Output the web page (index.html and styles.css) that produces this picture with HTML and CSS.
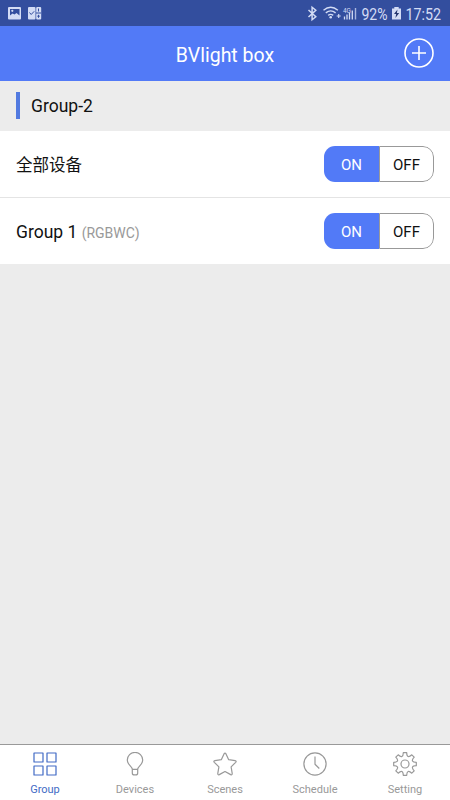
FILE: index.html
```html
<!DOCTYPE html>
<html lang="en">

<head>
    <meta charset="UTF-8">
    <meta name="viewport" content="width=device-width, initial-scale=1.0">
    <link rel="stylesheet" href="styles.css">
    <title>BVlight box</title>
</head>

<body>
    <div class="status-bar">
        <svg width="50" height="26" viewBox="0 0 50 26">
            <rect x="8" y="7" width="13" height="12.5" rx="1" fill="#d3dcf5" />
            <path d="M10 9h9.500v6.500l-3-2.500-2 1.500-2-1-2.500 2z" fill="#334e9e" />
            <circle cx="12.3" cy="10.8" r="1.1" fill="#d3dcf5" />
            <rect x="28" y="7" width="7.5" height="12.5" rx="1" fill="#d3dcf5" />
            <rect x="36.2" y="7" width="5" height="12.5" rx="1" fill="#d3dcf5" />
            <path d="M29.5 12.500l1.700 2 3-3.200M38.500 8.500v3M38.500 14.800v3M37.300 16.200h2.500M36 13h5" fill="none" stroke="#334e9e" />
        </svg>
        <svg width="150" height="26" viewBox="0 0 150 26">
            <path d="M8.500 10l7.300 6.800-3.700 3V7.200l3.700 3-7.300 6.800" fill="none" stroke="#d3dcf5" stroke-width="1.5" />
            <g fill="none" stroke="#d3dcf5" stroke-width="1.4">
                <path d="M23.500 10.200q7.200-5.800 14.400 0M25.800 12.900q4.900-4 9.800 0M28.200 15.400q2.500-2 5 0" />
                <path d="M36.700 16h4M38.700 14v4" stroke-width="1.1" />
            </g>
            <circle cx="30.700" cy="17.200" r="1.300" fill="#d3dcf5" />
            <text x="43" y="13" class="net" textLength="8" lengthAdjust="spacingAndGlyphs">4G</text>
            <path d="M44.500 19.500v-3M47 19.500v-5M49.500 19.500v-6.500M52.300 19.500v-9" stroke="#d3dcf5" stroke-width="1.3" />
            <path d="M55.500 19.500V8" stroke="#a9b7e0" stroke-width="1.400" />
            <text x="61.500" y="19.700" class="status-text" textLength="26" lengthAdjust="spacingAndGlyphs">92%</text>
            <path d="M92 8.500h2.300V7h4.400v1.500h2.300v11h-9z" fill="#d3dcf5" />
            <path d="M97.500 9.500l-3.500 4.400h2.200l-.8 4 3.800-5h-2.300z" fill="#26376f" />
            <text x="105.500" y="19.700" class="status-text" textLength="35.500" lengthAdjust="spacingAndGlyphs">17:52</text>
        </svg>
    </div>

    <header class="header">
        <h1 class="header-title">BVlight box</h1>
        <button class="add-button" aria-label="Add">
            <svg width="30" height="30" viewBox="0 0 30 30" fill="none" stroke="#fff" stroke-width="1.6">
                <circle cx="15" cy="15" r="14" />
                <path d="M8 15h14M15 8v14" />
            </svg>
        </button>
    </header>

    <main class="content">
        <div class="section-title"><span>Group-2</span></div>
        <div class="row">
            <div class="row-name" lang="zh">全部设备</div>
            <div class="switch">
                <button class="on">ON</button>
                <button class="off">OFF</button>
            </div>
        </div>
        <div class="row">
            <div class="row-name">Group 1 <small>(RGBWC)</small></div>
            <div class="switch">
                <button class="on">ON</button>
                <button class="off">OFF</button>
            </div>
        </div>
    </main>

    <nav class="tabs">
        <a class="tab active">
            <svg class="icon" viewBox="0 0 24 24">
                <rect x="1" y="1" width="9" height="9" />
                <rect x="14" y="1" width="9" height="9" />
                <rect x="1" y="14" width="9" height="9" />
                <rect x="14" y="14" width="9" height="9" />
            </svg>
            <span>Group</span>
        </a>
        <a class="tab">
            <svg class="icon" viewBox="0 0 24 24">
                <path d="M9.300 17.300c0-3-5-4.400-5-9.200a7.700 7.700 0 0 1 15.400 0c0 4.800-5 6.200-5 9.200zM9.300 17.300v3.600q0 2 2 2h1.400q2 0 2-2v-3.600" />
            </svg>
            <span>Devices</span>
        </a>
        <a class="tab">
            <svg class="icon" viewBox="0 0 24 24">
                <path d="M11 1.900q1-1.600 2 0l2.700 5.800 6.400.9q1.700.4.6 1.700l-4.600 4.600 1.100 6.500q.1 1.900-1.500 1.200L12 19.500l-5.700 3.100q-1.600.7-1.500-1.200l1.100-6.500-4.600-4.600Q.2 9 1.900 8.600l6.400-.9z" />
            </svg>
            <span>Scenes</span>
        </a>
        <a class="tab">
            <svg class="icon" viewBox="0 0 24 24">
                <circle cx="12" cy="12" r="11.100" />
                <path d="M12 4.500v7.800l4.300 4.200" />
            </svg>
            <span>Schedule</span>
        </a>
        <a class="tab">
            <svg class="icon" viewBox="0 0 24 24">
                <path d="M10.300.7h3.400q.1 3.300 1.400 3.800t3.700-1.700l2.400 2.400q-2.300 2.400-1.700 3.700t3.800 1.400v3.400q-3.300.1-3.800 1.400t1.700 3.700l-2.400 2.400q-2.400-2.300-3.700-1.700t-1.400 3.800h-3.400q-.1-3.300-1.400-3.800t-3.700 1.700l-2.400-2.400q2.300-2.400 1.700-3.700T.7 13.700v-3.400q3.300-.1 3.800-1.400T2.800 5.200l2.400-2.400q2.400 2.300 3.700 1.700T10.300.7z" />
                <circle cx="12" cy="12" r="4" />
            </svg>
            <span>Setting</span>
        </a>
    </nav>
</body>

</html>
```

FILE: styles.css
```css
* {
    box-sizing: border-box;
}

body {
    margin: 0;
    height: 100vh;
    display: flex;
    flex-direction: column;
    overflow: hidden;
    background-color: #ececec;
    color: #111;
    font-family: Roboto, 'Noto Sans CJK SC', sans-serif;
}

button {
    font-family: inherit;
    padding: 0;
    border: 0;
    background: none;
}

svg {
    display: block;
}

.status-bar {
    display: flex;
    justify-content: space-between;
    height: 26px;
    background-color: #334e9e;
}

.status-text {
    font-size: 17px;
    fill: #d3dcf5;
}

.net {
    font-size: 7px;
    fill: #d3dcf5;
}

.header {
    display: grid;
    grid-template-columns: 1fr auto 1fr;
    align-items: center;
    height: 55px;
    padding: 0 16px;
    background-color: #527af7;
    color: #fff;
}

.header-title {
    grid-column: 2;
    margin: 4px 0 0;
    font-size: 19.5px;
    font-weight: 400;
}

.add-button {
    justify-self: end;
    margin-bottom: 1px;
}

.content {
    flex: 1;
}

.section-title {
    display: flex;
    height: 50px;
    padding: 11px 0 0 16px;
    font-size: 17.5px;
}

.section-title span {
    height: 27px;
    line-height: 28px;
    padding-left: 11px;
    border-left: 4px solid #527ae0;
}

.row {
    display: flex;
    align-items: center;
    justify-content: space-between;
    height: 66px;
    padding: 0 16px;
    background-color: #fff;
}

.row + .row {
    height: 67px;
    border-top: 1px solid #e4e4e4;
}

.row-name {
    padding-top: 2px;
    font-size: 17.5px;
}

.row-name:lang(zh) {
    padding-top: 0;
    font-size: 16.5px;
}

.row-name small {
    color: #999;
    font-size: 14px;
}

.switch {
    display: flex;
    width: 110px;
    height: 36px;
    overflow: hidden;
    border-radius: 11px;
}

.switch button {
    width: 55px;
    padding-top: 2px;
    font-size: 15px;
}

.on {
    background-color: #527af7;
    color: #fff;
}

.off {
    color: #111;
}

.switch .off {
    border: 1px solid #999;
    border-radius: 0 11px 11px 0;
}

.tabs {
    display: flex;
    height: 56px;
    border-top: 1px solid #999;
    background-color: #fff;
}

.tab {
    flex: 1;
    display: flex;
    flex-direction: column;
    align-items: center;
    padding-top: 7px;
    color: #999;
    font-size: 11px;
    line-height: 14px;
}

.tab span {
    margin-top: 7px;
}

.active {
    color: #426bc5;
}

.icon {
    width: 24px;
    height: 24px;
    fill: none;
    stroke: currentColor;
    stroke-width: 1.2;
    stroke-linejoin: round;
}
```
